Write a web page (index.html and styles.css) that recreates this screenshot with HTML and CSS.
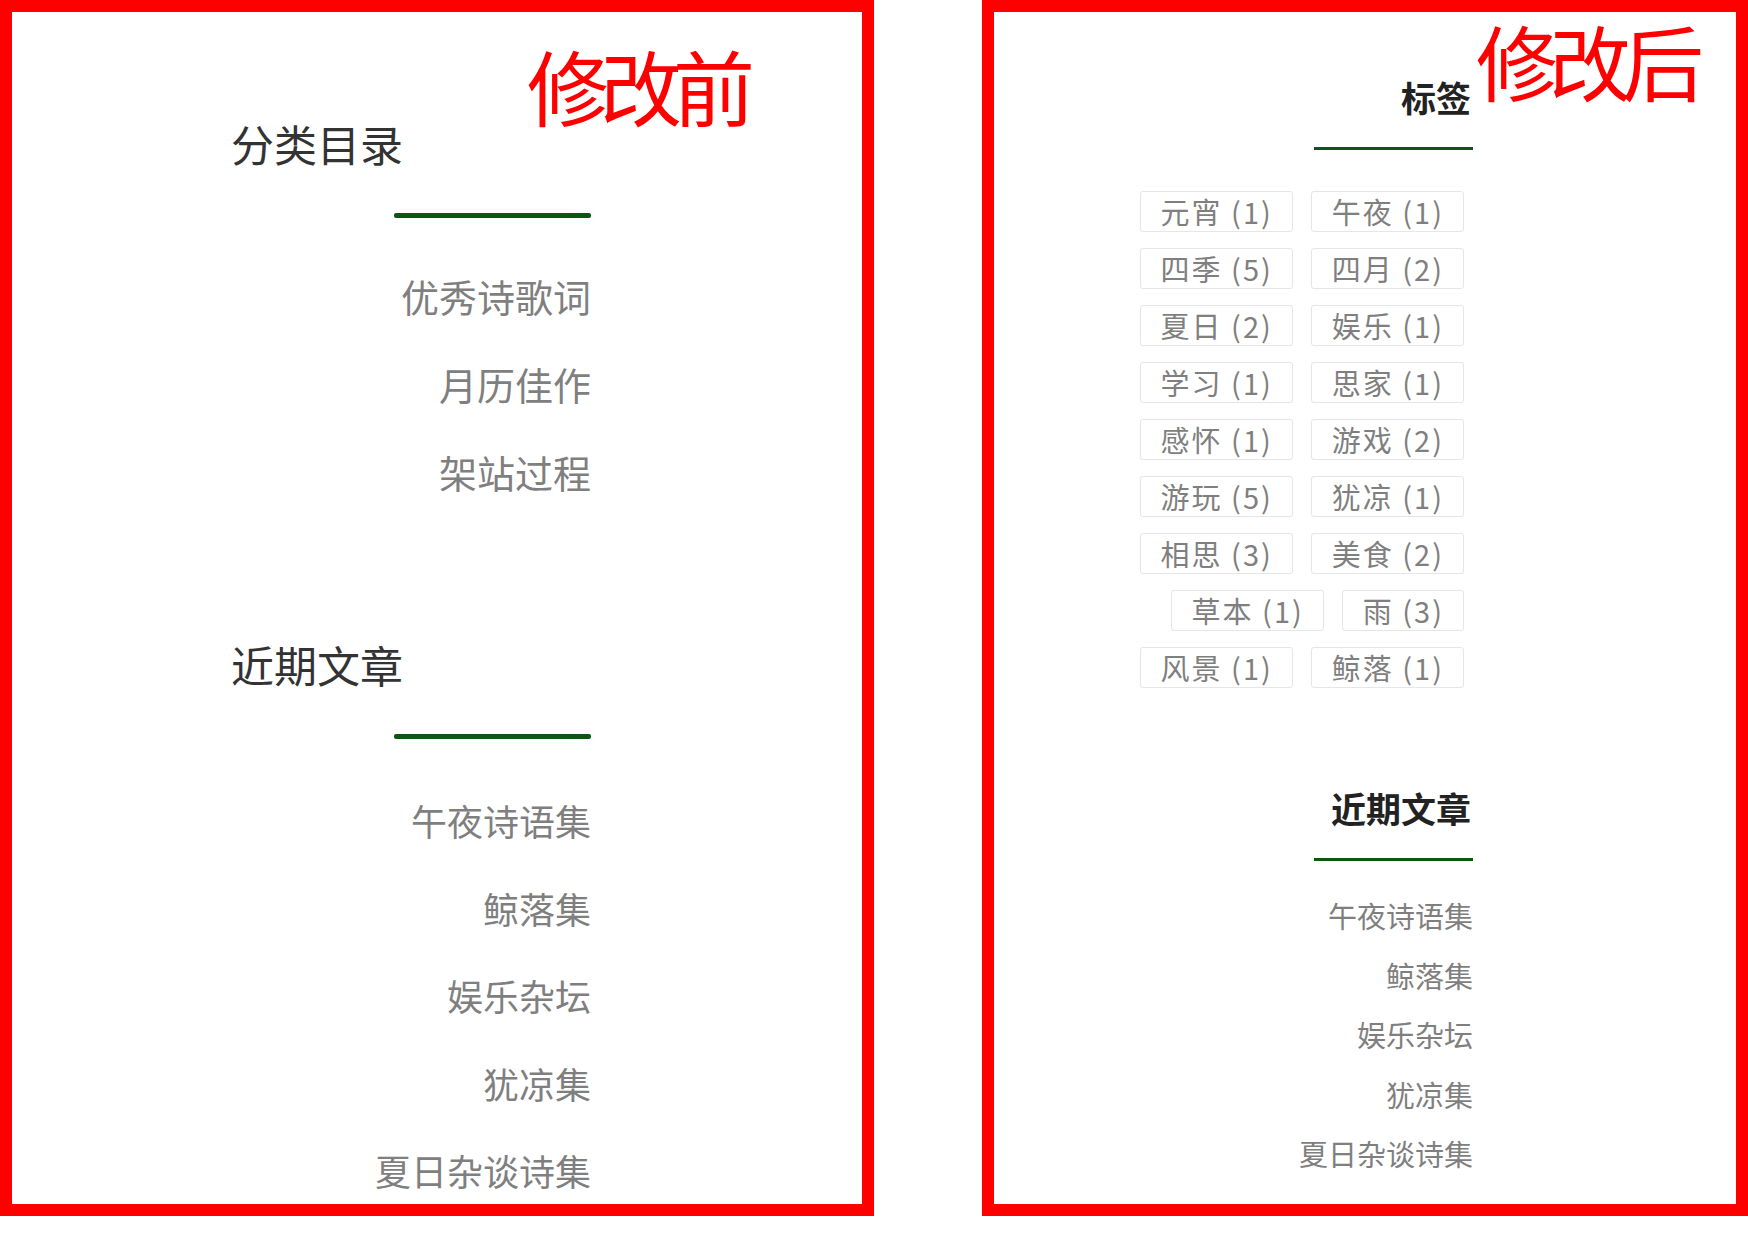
FILE: index.html
```html
<!DOCTYPE html>
<html lang="zh-CN">
<head>
<meta charset="utf-8">
<title>修改前 / 修改后</title>
<link rel="stylesheet" href="styles.css">
</head>
<body>
<div class="page">
  <section class="panel panel-before">
    <div class="label label-before">修改前</div>
    <div class="old-col">
      <div class="old-widget">
        <h2 class="old-title">分类目录</h2>
        <div class="old-rule"></div>
        <ul class="old-list">
          <li>优秀诗歌词</li>
          <li>月历佳作</li>
          <li>架站过程</li>
        </ul>
      </div>
      <div class="old-widget old-widget-second">
        <h2 class="old-title">近期文章</h2>
        <div class="old-rule"></div>
        <ul class="old-list old-list-small">
          <li>午夜诗语集</li>
          <li>鲸落集</li>
          <li>娱乐杂坛</li>
          <li>犹凉集</li>
          <li>夏日杂谈诗集</li>
        </ul>
      </div>
    </div>
  </section>
  <section class="panel panel-after">
    <div class="label label-after">修改后</div>
    <div class="new-col">
      <div class="new-widget">
        <h2 class="new-title">标签</h2>
        <div class="new-rule"></div>
        <div class="tags">
          <span class="tag">元宵 (1)</span>
          <span class="tag">午夜 (1)</span>
          <span class="tag">四季 (5)</span>
          <span class="tag">四月 (2)</span>
          <span class="tag">夏日 (2)</span>
          <span class="tag">娱乐 (1)</span>
          <span class="tag">学习 (1)</span>
          <span class="tag">思家 (1)</span>
          <span class="tag">感怀 (1)</span>
          <span class="tag">游戏 (2)</span>
          <span class="tag">游玩 (5)</span>
          <span class="tag">犹凉 (1)</span>
          <span class="tag">相思 (3)</span>
          <span class="tag">美食 (2)</span>
          <span class="tag">草本 (1)</span>
          <span class="tag">雨 (3)</span>
          <span class="tag">风景 (1)</span>
          <span class="tag">鲸落 (1)</span>
        </div>
      </div>
      <div class="new-widget new-widget-second">
        <h2 class="new-title">近期文章</h2>
        <div class="new-rule"></div>
        <ul class="new-list">
          <li>午夜诗语集</li>
          <li>鲸落集</li>
          <li>娱乐杂坛</li>
          <li>犹凉集</li>
          <li>夏日杂谈诗集</li>
        </ul>
      </div>
    </div>
  </section>
</div>
</body>
</html>
```

FILE: styles.css
```css
* {
  box-sizing: border-box;
}

html,
body {
  margin: 0;
  padding: 0;
  background: #ffffff;
}

body {
  width: 1748px;
  height: 1240px;
  overflow: hidden;
  font-family: "Noto Sans CJK SC", "Noto Sans", sans-serif;
}

.page {
  display: flex;
  align-items: flex-start;
  gap: 108px;
}

.panel {
  position: relative;
  height: 1216px;
  border: 12px solid #ff0000;
  background: #ffffff;
}

.panel-before {
  width: 874px;
  padding: 110px 0 0 219px;
}

.panel-after {
  width: 766px;
  padding: 67px 263px 0 0;
  display: flex;
  justify-content: flex-end;
}

/* red annotation labels */
.label {
  position: absolute;
  font-size: 82px;
  line-height: 82px;
  color: #ff0000;
  font-weight: 400;
  letter-spacing: -9px;
  white-space: nowrap;
}

.label-before {
  left: 515px;
  top: 32px;
}

.label-after {
  left: 482px;
  top: 7px;
}

/* before: old sidebar */
.old-col {
  width: 360px;
}

.old-widget-second {
  margin-top: 127px;
}

.old-title {
  margin: 0;
  font-size: 43px;
  line-height: 43px;
  font-weight: 400;
  color: #333333;
  text-align: left;
}

.old-rule {
  width: 197px;
  height: 5px;
  margin: 48px 0 0 auto;
  background: #0d5512;
  border-radius: 2px;
}

.old-list {
  list-style: none;
  margin: 34px 0 0;
  padding: 0;
  text-align: right;
  font-size: 38px;
  line-height: 88px;
  color: #7f7f7f;
}

.old-list-small {
  margin-top: 38px;
  font-size: 36px;
  line-height: 87.5px;
}

/* after: new sidebar */
.new-col {
  width: 400px;
}

.new-widget-second {
  margin-top: 102px;
}

.new-title {
  margin: 0 2px 0 0;
  font-size: 35px;
  line-height: 35px;
  font-weight: 700;
  color: #222222;
  text-align: right;
}

.new-rule {
  width: 159px;
  height: 3px;
  margin: 33px 0 0 auto;
  background: #0d5512;
}

.tags {
  display: flex;
  flex-wrap: wrap;
  justify-content: flex-end;
  gap: 16px 18px;
  margin-top: 41px;
  padding-right: 9px;
}

.tag {
  display: inline-block;
  height: 41px;
  line-height: 39px;
  padding: 0 19px 0 20px;
  border: 1px solid #e6e6e6;
  border-radius: 3px;
  box-shadow: 0 0 1px rgba(0, 0, 0, 0.06);
  font-size: 29px;
  letter-spacing: 2px;
  color: #7f7f7f;
  white-space: nowrap;
}

.new-list {
  list-style: none;
  margin: 25px 0 0;
  padding: 0;
  text-align: right;
  font-size: 29px;
  line-height: 59.5px;
  color: #7f7f7f;
}
```
